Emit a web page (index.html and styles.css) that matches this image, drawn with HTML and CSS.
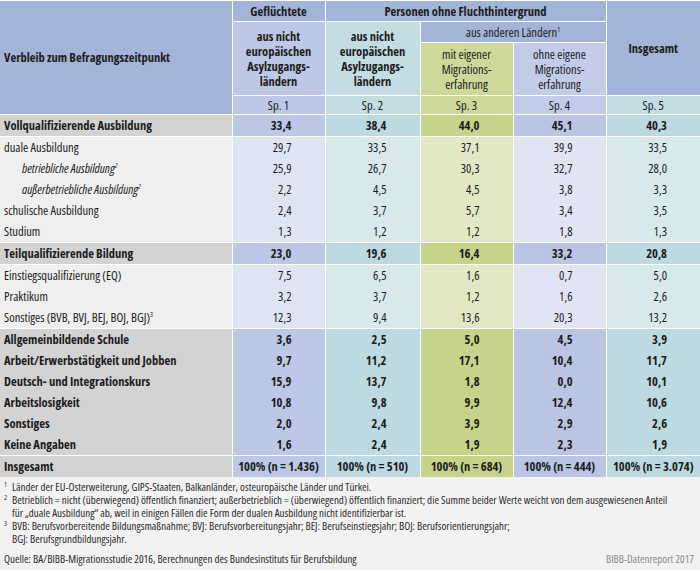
FILE: index.html
```html
<!DOCTYPE html>
<html lang="de">
<head>
<meta charset="utf-8">
<link rel="stylesheet" href="styles.css">
</head>
<body>
<div class="page">
<table class="tbl">
  <colgroup>
    <col class="c-label"><col class="c-1"><col class="c-2"><col class="c-3"><col class="c-4"><col class="c-5">
  </colgroup>
  <thead>
    <tr class="h-top">
      <th rowspan="4" class="h-label">Verbleib zum Befragungszeitpunkt</th>
      <th class="h-blue">Geflüchtete</th>
      <th colspan="3" class="h-blue">Personen ohne Fluchthintergrund</th>
      <th rowspan="3" class="h-blue">Insgesamt</th>
    </tr>
    <tr class="h-mid">
      <th rowspan="2" class="h1 multi">aus nicht<br>europäischen<br>Asylzugangs-<br>ländern</th>
      <th rowspan="2" class="h2 multi">aus nicht<br>europäischen<br>Asylzugangs-<br>ländern</th>
      <th colspan="2" class="h-blue reg">aus anderen Ländern<sup>1</sup></th>
    </tr>
    <tr class="h-low">
      <th class="h3 reg multi">mit eigener<br>Migrations-<br>erfahrung</th>
      <th class="h4 reg multi">ohne eigene<br>Migrations-<br>erfahrung</th>
    </tr>
    <tr class="h-sp">
      <th class="h1 reg">Sp. 1</th>
      <th class="h2 reg">Sp. 2</th>
      <th class="h3 reg">Sp. 3</th>
      <th class="h4 reg">Sp. 4</th>
      <th class="h2 reg">Sp. 5</th>
    </tr>
  </thead>
  <tbody class="grp strong">
    <tr><td>Vollqualifizierende Ausbildung</td><td>33,4</td><td>38,4</td><td>44,0</td><td>45,1</td><td>40,3</td></tr>
  </tbody>
  <tbody class="grp light">
    <tr><td>duale Ausbildung</td><td>29,7</td><td>33,5</td><td>37,1</td><td>39,9</td><td>33,5</td></tr>
    <tr><td class="ind">betriebliche Ausbildung<sup>2</sup></td><td>25,9</td><td>26,7</td><td>30,3</td><td>32,7</td><td>28,0</td></tr>
    <tr><td class="ind">außerbetriebliche Ausbildung<sup>2</sup></td><td>2,2</td><td>4,5</td><td>4,5</td><td>3,8</td><td>3,3</td></tr>
    <tr><td>schulische Ausbildung</td><td>2,4</td><td>3,7</td><td>5,7</td><td>3,4</td><td>3,5</td></tr>
    <tr><td>Studium</td><td>1,3</td><td>1,2</td><td>1,2</td><td>1,8</td><td>1,3</td></tr>
  </tbody>
  <tbody class="grp strong">
    <tr><td>Teilqualifizierende Bildung</td><td>23,0</td><td>19,6</td><td>16,4</td><td>33,2</td><td>20,8</td></tr>
  </tbody>
  <tbody class="grp light">
    <tr><td>Einstiegsqualifizierung (EQ)</td><td>7,5</td><td>6,5</td><td>1,6</td><td>0,7</td><td>5,0</td></tr>
    <tr><td>Praktikum</td><td>3,2</td><td>3,7</td><td>1,2</td><td>1,6</td><td>2,6</td></tr>
    <tr><td>Sonstiges (BVB, BVJ, BEJ, BOJ, BGJ)<sup>3</sup></td><td>12,3</td><td>9,4</td><td>13,6</td><td>20,3</td><td>13,2</td></tr>
  </tbody>
  <tbody class="grp strong">
    <tr><td>Allgemeinbildende Schule</td><td>3,6</td><td>2,5</td><td>5,0</td><td>4,5</td><td>3,9</td></tr>
    <tr><td>Arbeit/Erwerbstätigkeit und Jobben</td><td>9,7</td><td>11,2</td><td>17,1</td><td>10,4</td><td>11,7</td></tr>
    <tr><td>Deutsch- und Integrationskurs</td><td>15,9</td><td>13,7</td><td>1,8</td><td>0,0</td><td>10,1</td></tr>
    <tr><td>Arbeitslosigkeit</td><td>10,8</td><td>9,8</td><td>9,9</td><td>12,4</td><td>10,6</td></tr>
    <tr><td>Sonstiges</td><td>2,0</td><td>2,4</td><td>3,9</td><td>2,9</td><td>2,6</td></tr>
    <tr><td>Keine Angaben</td><td>1,6</td><td>2,4</td><td>1,9</td><td>2,3</td><td>1,9</td></tr>
  </tbody>
  <tbody class="grp strong total">
    <tr><td>Insgesamt</td><td>100% (n = 1.436)</td><td>100% (n = 510)</td><td>100% (n = 684)</td><td>100% (n = 444)</td><td>100% (n = 3.074)</td></tr>
  </tbody>
</table>
<div class="notes">
  <p class="fn"><sup>1</sup>Länder der EU-Osterweiterung, GIPS-Staaten, Balkanländer, osteuropäische Länder und Türkei.</p>
  <p class="fn"><sup>2</sup>Betrieblich = nicht (überwiegend) öffentlich finanziert; außerbetrieblich = (überwiegend) öffentlich finanziert; die Summe beider Werte weicht von dem ausgewiesenen Anteil<br>für „duale Ausbildung“ ab, weil in einigen Fällen die Form der dualen Ausbildung nicht identifizierbar ist.</p>
  <p class="fn"><sup>3</sup>BVB: Berufsvorbereitende Bildungsmaßnahme; BVJ: Berufsvorbereitungsjahr; BEJ: Berufseinstiegsjahr; BOJ: Berufsorientierungsjahr;<br>BGJ: Berufsgrundbildungsjahr.</p>
  <div class="source">
    <span>Quelle: BA/BIBB-Migrationsstudie 2016, Berechnungen des Bundesinstituts für Berufsbildung</span>
    <span class="brand">BIBB-Datenreport 2017</span>
  </div>
</div>
</div>
</body>
</html>
```
FILE: styles.css
```css
html, body {
  margin: 0;
  padding: 0;
  background: #ffffff;
}
.page {
  width: 700px;
  font-family: "Open Sans", "DejaVu Sans Condensed", sans-serif;
  font-stretch: 75%;
  color: #1c1c1c;
  padding-top: 1px;
}
.tbl {
  width: 700px;
  border-collapse: collapse;
  table-layout: fixed;
  font-size: 12.5px;
}
.c-label { width: 232px; }
.c-1 { width: 93px; }
.c-2 { width: 95px; }
.c-3 { width: 93px; }
.c-4 { width: 93px; }
.c-5 { width: 94px; }

.tbl th {
  font-weight: bold;
  text-align: center;
  vertical-align: middle;
  padding: 0 2px;
  border: 1px solid #ffffff;
  line-height: 15px;
}
.tbl th.reg { font-weight: normal; }
.tbl th.h-label {
  text-align: left;
  padding-left: 4px;
  background: #a2b4d7;
  border-left: 0;
}
.h-top th { height: 20px; border-top: 0; }
.h-mid th { height: 20px; }
.h-low th { height: 52px; }
.h-sp th { height: 18px; }
.h-blue { background: #a2b4d7; }
.h1 { background: #bcc8e5; }
.h2 { background: #c3dde2; }
.h3 { background: #cdd899; }
.h4 { background: #c2cbe8; }
.tbl tr > th:last-child { border-right: 0; }

.tbl td {
  height: 21px;
  padding: 0 33px 0 0;
  text-align: right;
  border-left: 1px solid #ffffff;
  line-height: 14px;
  white-space: nowrap;
}
.tbl td:first-child {
  text-align: left;
  padding: 0 0 0 4px;
  border-left: 0;
}
.tbl td.ind {
  padding-left: 22px;
  font-style: italic;
}
.grp { border-top: 1px solid #ffffff; }

.strong td { font-weight: bold; }
.strong td:nth-child(1) { background: #d3d3d3; }
.strong td:nth-child(2) { background: #bcc8e5; }
.strong td:nth-child(3) { background: #bddae0; }
.strong td:nth-child(4) { background: #c7d38b; }
.strong td:nth-child(5) { background: #bac5e3; }
.strong td:nth-child(6) { background: #bddae0; }

.light td:nth-child(1) { background: #efefef; }
.light td:nth-child(2) { background: #dfe4f2; }
.light td:nth-child(3) { background: #d8e9ec; }
.light td:nth-child(4) { background: #e2e8c5; }
.light td:nth-child(5) { background: #e1e5f3; }
.light td:nth-child(6) { background: #d8e9ec; }

.total td { text-align: center; padding: 0; }
.total td:first-child { text-align: left; padding-left: 4px; }

sup {
  font-size: 7px;
  line-height: 0;
  vertical-align: 5px;
}
.notes {
  background: #f2f2f2;
  padding: 3px 6px 5px 4px;
  font-size: 11px;
  font-stretch: 82%;
  line-height: 13px;
  color: #2b2b2b;
  white-space: nowrap;
}
.fn {
  margin: 0;
  padding-left: 8px;
  text-indent: -8px;
  line-height: 13px;
}
.fn sup {
  display: inline-block;
  width: 8px;
  text-indent: 0;
  line-height: 0;
  vertical-align: 4px;
}
.source {
  display: flex;
  justify-content: space-between;
  margin-top: 7px;
}
.brand { color: #8a8a8a; }
```
